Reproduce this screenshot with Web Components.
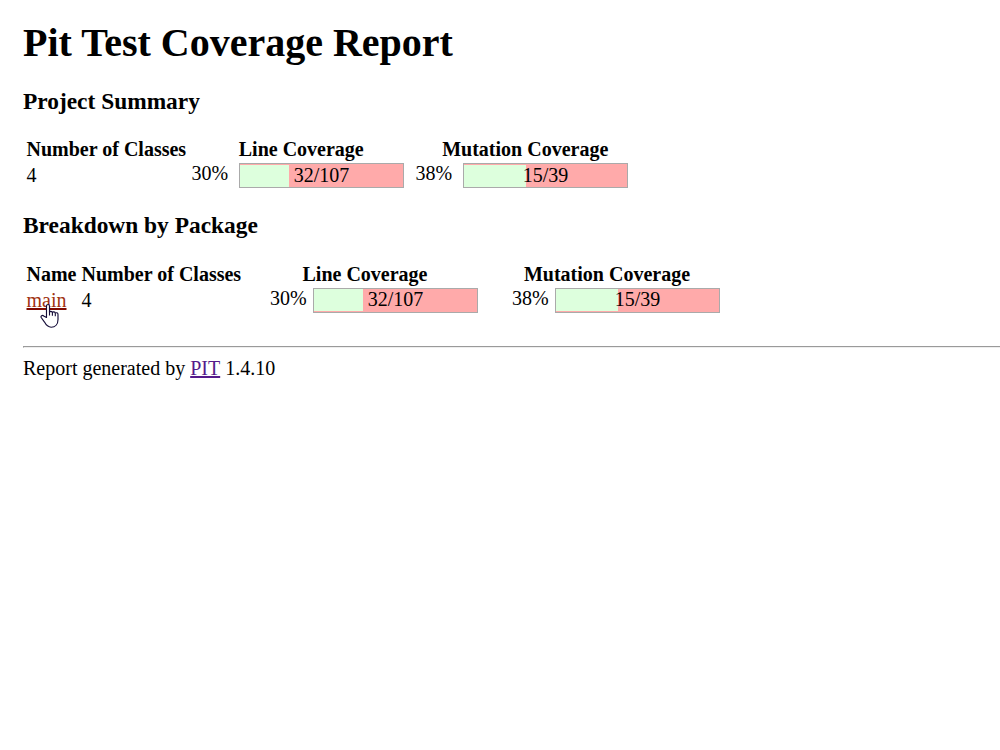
<!DOCTYPE html>
<html lang="en">
<head>
<meta charset="utf-8">
<title>Pit Test Coverage Report</title>
<style>
body{margin:0;background:#fff;color:#000;font:20px/23px "Liberation Serif",serif;overflow:hidden}
</style>
</head>
<body>
<coverage-report>
  <report-heading slot="title" level="1">Pit Test Coverage Report</report-heading>
  <report-heading level="3">Project Summary</report-heading>
  <coverage-table class="summary">
    <table-cell head>Number of Classes</table-cell>
    <table-cell head center>Line Coverage</table-cell>
    <table-cell head center>Mutation Coverage</table-cell>
    <table-cell>4</table-cell>
    <coverage-meter percent="30" fill="49">32/107</coverage-meter>
    <coverage-meter percent="38" fill="62">15/39</coverage-meter>
  </coverage-table>
  <report-heading level="3">Breakdown by Package</report-heading>
  <coverage-table class="packages">
    <table-cell head>Name</table-cell>
    <table-cell head>Number of Classes</table-cell>
    <table-cell head center>Line Coverage</table-cell>
    <table-cell head center>Mutation Coverage</table-cell>
    <table-cell><report-link active>main</report-link></table-cell>
    <table-cell>4</table-cell>
    <coverage-meter compact percent="30" fill="49">32/107</coverage-meter>
    <coverage-meter compact percent="38" fill="62">15/39</coverage-meter>
  </coverage-table>
  <report-footer>Report generated by <report-link>PIT</report-link> 1.4.10</report-footer>
</coverage-report>
<script>
const define = (name, render) => customElements.define(name, class extends HTMLElement {
  constructor() { super(); this.attachShadow({mode: 'open'}); }
  connectedCallback() { this.shadowRoot.innerHTML = render(this); }
});

define('coverage-report', () => `
<style>:host{display:flex;flex-direction:column;padding:20px 0 0 23px}</style>
<slot name="title"></slot><slot></slot>`);

define('report-heading', el => el.getAttribute('level') === '1' ? `
<style>:host{display:block}h1{margin:0 0 22px;font-size:40px;line-height:46px}</style><h1><slot></slot></h1>` : `
<style>:host{display:block}h3{margin:0;font-size:23.4px;line-height:27px;padding-bottom:23px}</style><h3><slot></slot></h3>`);

define('coverage-table', () => `
<style>
:host{display:grid;grid-template-rows:24px 27px;justify-content:start;padding-left:3.5px}
:host(.summary){--head-width:219.5px;grid-template-columns:165px 224px 220px;margin-bottom:23px}
:host(.packages){--head-width:190px;grid-template-columns:55px 188.5px 242px 209px;margin-top:1px;margin-bottom:32px}
</style><slot></slot>`);

define('table-cell', () => `
<style>
:host{display:block;white-space:nowrap;padding-top:2px}
:host([head]){font-weight:bold;padding-top:0}
:host([center]){text-align:center;width:var(--head-width,auto)}
</style><slot></slot>`);

define('coverage-meter', el => `
<style>
:host{display:flex}
.pct{width:47.5px}
:host([compact]) .pct{width:43px}
.bar{box-sizing:border-box;width:165px;height:25px;margin-top:1px;border:1px solid #aaa;
  background:linear-gradient(#dfd,#dfd) 0 1px/${el.getAttribute('fill')}px 22px no-repeat #faa;text-align:center}
:host([compact]) .bar{background-position:0 0;line-height:20px}
</style><span class="pct">${el.getAttribute('percent')}%</span><div class="bar"><slot></slot></div>`);

define('report-link', el => `
<style>
:host{display:inline-block;position:relative}
a{color:#551a8b;text-decoration:underline;text-decoration-thickness:2px;text-underline-offset:1px;text-decoration-skip-ink:none}
:host([active]) a{color:#a03210;text-decoration-color:#800a00}
svg{position:absolute;left:13px;top:14px}
</style><a><slot></slot></a>${el.hasAttribute('active') ? `
<svg width="20" height="26" viewBox="0 0 20 26"><path d="M6.5 14.5V3.2C6.5.9 9.5.9 9.5 3.2V9.3c.2-1.3 2.6-1.3 2.9.3.5-1.1 2.6-1 2.9.6.8-.9 2.7-.5 2.7 1.2v5.1c0 4.6-2.8 7.7-6.8 7.7-3.5 0-5.2-2.2-6.7-5.1L1.2 14.5c-.8-1.5 1.2-2.8 2.5-1.5z" fill="#fff" stroke="#140c38" stroke-width="1.15" stroke-linejoin="round"/><path d="M9.5 8.5v4M12.4 9.6v3.2M15.3 10.2v3" stroke="#140c38" stroke-width="1.1" fill="none"/></svg>` : ''}`);

define('report-footer', () => `
<style>:host{display:block}hr{margin:0 0 9px;border:0;border-top:1px solid #9a9a9a;border-bottom:1px solid #eee;border-left:1px solid #9a9a9a}</style>
<hr><slot></slot>`);
</script>
</body>
</html>
